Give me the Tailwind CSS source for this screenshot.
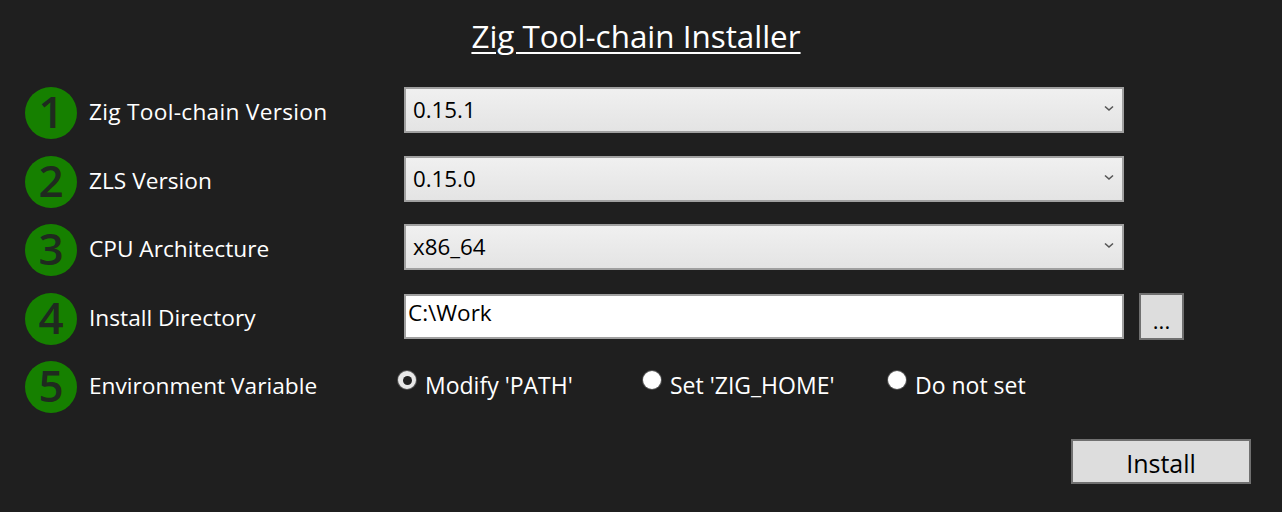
<!DOCTYPE html>
<html lang="en">
<head>
    <meta charset="UTF-8">
    <title>Zig Tool-chain Installer</title>
    <script src="https://cdn.jsdelivr.net/npm/@tailwindcss/browser@4"></script>
</head>
<body class="bg-[#1f1f1f] w-[1282px] h-[512px] overflow-hidden text-white font-['Open_Sans','Noto_Sans',sans-serif]">
    <!-- Title -->
    <h1 class="pt-[13px] h-[87px] text-center pr-[10px] text-[31.4px] leading-[46px] underline underline-offset-[4px] decoration-2">Zig Tool-chain Installer</h1>

    <div class="flex flex-col gap-[16.6px] pl-[25px]">
        <!-- Version -->
        <div class="flex h-[52px]">
            <span class="w-[52px] h-[52px] rounded-full bg-[#168000] text-[#1f2a1f] text-[44px] leading-[49px] text-center font-semibold">1</span>
            <span class="w-[327px] pl-[12px] pt-[7px] text-[22.7px] leading-[36px] tracking-[0.28px]">Zig Tool-chain Version</span>
            <div class="relative w-[720px] h-[46px]">
                <select class="appearance-none w-full h-full border-2 border-[#a0a0a0] bg-linear-to-b from-[#f0f0f0] to-[#e4e4e4] text-black pl-[7px] text-[22.3px]">
                    <option>0.15.1</option>
                </select>
                <svg class="absolute right-[10px] top-[18px]" width="10" height="7" viewBox="0 0 10 7"><path d="M1 1.5 5 5 9 1.5" fill="none" stroke="#555" stroke-width="1.6"/></svg>
            </div>
        </div>
        <div class="flex h-[52px]">
            <span class="w-[52px] h-[52px] rounded-full bg-[#168000] text-[#1f2a1f] text-[44px] leading-[49px] text-center font-semibold">2</span>
            <span class="w-[327px] pl-[12px] pt-[7px] text-[22.7px] leading-[36px]">ZLS Version</span>
            <div class="relative w-[720px] h-[46px]">
                <select class="appearance-none w-full h-full border-2 border-[#a0a0a0] bg-linear-to-b from-[#f0f0f0] to-[#e4e4e4] text-black pl-[7px] text-[22.3px]">
                    <option>0.15.0</option>
                </select>
                <svg class="absolute right-[10px] top-[18px]" width="10" height="7" viewBox="0 0 10 7"><path d="M1 1.5 5 5 9 1.5" fill="none" stroke="#555" stroke-width="1.6"/></svg>
            </div>
        </div>
        <div class="flex h-[52px]">
            <span class="w-[52px] h-[52px] rounded-full bg-[#168000] text-[#1f2a1f] text-[44px] leading-[49px] text-center font-semibold">3</span>
            <span class="w-[327px] pl-[12px] pt-[7px] text-[22.7px] leading-[36px]">CPU Architecture</span>
            <div class="relative w-[720px] h-[46px]">
                <select class="appearance-none w-full h-full border-2 border-[#a0a0a0] bg-linear-to-b from-[#f0f0f0] to-[#e4e4e4] text-black pl-[7px] text-[22.3px]">
                    <option>x86_64</option>
                </select>
                <svg class="absolute right-[10px] top-[18px]" width="10" height="7" viewBox="0 0 10 7"><path d="M1 1.5 5 5 9 1.5" fill="none" stroke="#555" stroke-width="1.6"/></svg>
            </div>
        </div>
        <!-- Directory -->
        <div class="flex h-[52px]">
            <span class="w-[52px] h-[52px] rounded-full bg-[#168000] text-[#1f2a1f] text-[44px] leading-[49px] text-center font-semibold">4</span>
            <span class="w-[327px] pl-[12px] pt-[7px] text-[22.7px] leading-[36px]">Install Directory</span>
            <input value="C:\Work" class="mt-px w-[720px] h-[45px] border-2 border-[#a0a0a0] bg-white text-black pl-[2px] pb-[8px] text-[22.5px]">
            <button class="ml-[15px] w-[45px] h-[47px] border-2 border-[#707070] bg-[#dddddd] text-black text-[22px] pt-[9px]">...</button>
        </div>
        <!-- Environment variable -->
        <div class="flex h-[52px]">
            <span class="w-[52px] h-[52px] rounded-full bg-[#168000] text-[#1f2a1f] text-[44px] leading-[49px] text-center font-semibold">5</span>
            <span class="w-[327px] pl-[12px] pt-[7px] text-[22.7px] leading-[36px]">Environment Variable</span>
            <div class="flex items-start -ml-[6px]">
                <span class="mt-[10px] w-[18px] h-[18px] rounded-full bg-white border-[5px] border-[#e8e8e8] ring-1 ring-[#555] flex items-center justify-center"><span class="w-[9px] h-[9px] rounded-full bg-[#222] -m-1 block"></span></span>
                <span class="w-[227px] mt-[6px] pl-[9px] text-[23px] leading-[36px]">Modify 'PATH'</span>
                <span class="mt-[10px] w-[18px] h-[18px] rounded-full bg-white ring-1 ring-[#555]"></span>
                <span class="w-[227px] mt-[6px] pl-[9px] text-[23px] leading-[36px]">Set 'ZIG_HOME'</span>
                <span class="mt-[10px] w-[18px] h-[18px] rounded-full bg-white ring-1 ring-[#555]"></span>
                <span class="pl-[9px] mt-[6px] text-[23px] leading-[36px]">Do not set</span>
            </div>
        </div>
    </div>

    <!-- Install -->
    <div class="flex justify-end pr-[31px] pt-[26px]">
        <button class="w-[180px] h-[45px] border-2 border-[#707070] bg-[#dddddd] text-black text-[25px] leading-[45px]">Install</button>
    </div>
</body>
</html>
